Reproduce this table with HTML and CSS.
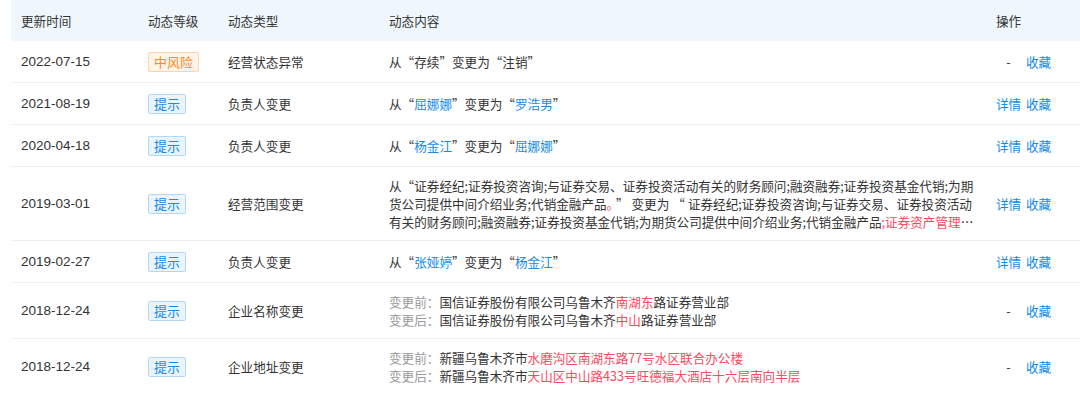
FILE: index.html
```html
<!DOCTYPE html>
<html lang="zh-CN">
<head>
<meta charset="utf-8">
<title>动态</title>
<link rel="stylesheet" href="styles.css">
</head>
<body>
<table class="dyn">
  <colgroup>
    <col class="c-date"><col class="c-level"><col class="c-type"><col class="c-content"><col class="c-op">
  </colgroup>
  <thead>
    <tr><th>更新时间</th><th>动态等级</th><th>动态类型</th><th>动态内容</th><th>操作</th></tr>
  </thead>
  <tbody>
    <tr>
      <td class="date">2022-07-15</td>
      <td><span class="tag tag-warn">中风险</span></td>
      <td>经营状态异常</td>
      <td class="content">从“存续”变更为“注销”</td>
      <td><span class="ops"><span class="slot">-</span><a class="link">收藏</a></span></td>
    </tr>
    <tr>
      <td class="date">2021-08-19</td>
      <td><span class="tag tag-info">提示</span></td>
      <td>负责人变更</td>
      <td class="content">从“<a class="link">屈娜娜</a>”变更为“<a class="link">罗浩男</a>”</td>
      <td><span class="ops"><a class="link slot">详情</a><a class="link">收藏</a></span></td>
    </tr>
    <tr>
      <td class="date">2020-04-18</td>
      <td><span class="tag tag-info">提示</span></td>
      <td>负责人变更</td>
      <td class="content">从“<a class="link">杨金江</a>”变更为“<a class="link">屈娜娜</a>”</td>
      <td><span class="ops"><a class="link slot">详情</a><a class="link">收藏</a></span></td>
    </tr>
    <tr>
      <td class="date">2019-03-01</td>
      <td><span class="tag tag-info">提示</span></td>
      <td>经营范围变更</td>
      <td class="content"><div class="clamp">从“证券经纪;证券投资咨询;与证券交易、证券投资活动有关的财务顾问;融资融券;证券投资基金代销;为期货公司提供中间介绍业务;代销金融产品<span class="red">。</span><span class="q">”</span>变更为<span class="q">“</span>证券经纪;证券投资咨询;与证券交易、证券投资活动有关的财务顾问;融资融券;证券投资基金代销;为期货公司提供中间介绍业务;代销金融产品<span class="red">;证券资产管理(依法须经批准的项目,经相关部门批准后方可开展经营活动)</span>”</div></td>
      <td><span class="ops"><a class="link slot">详情</a><a class="link">收藏</a></span></td>
    </tr>
    <tr>
      <td class="date">2019-02-27</td>
      <td><span class="tag tag-info">提示</span></td>
      <td>负责人变更</td>
      <td class="content">从“<a class="link">张娅婷</a>”变更为“<a class="link">杨金江</a>”</td>
      <td><span class="ops"><a class="link slot">详情</a><a class="link">收藏</a></span></td>
    </tr>
    <tr>
      <td class="date">2018-12-24</td>
      <td><span class="tag tag-info">提示</span></td>
      <td>企业名称变更</td>
      <td class="content">
        <div class="lines">
          <div><span class="label">变更前：</span>国信证券股份有限公司乌鲁木齐<span class="red">南湖东</span>路证券营业部</div>
          <div><span class="label">变更后：</span>国信证券股份有限公司乌鲁木齐<span class="red">中山</span>路证券营业部</div>
        </div>
      </td>
      <td><span class="ops"><span class="slot">-</span><a class="link">收藏</a></span></td>
    </tr>
    <tr>
      <td class="date">2018-12-24</td>
      <td><span class="tag tag-info">提示</span></td>
      <td>企业地址变更</td>
      <td class="content">
        <div class="lines">
          <div><span class="label">变更前：</span>新疆乌鲁木齐市<span class="red">水磨沟区南湖东路77号水区联合办公楼</span></div>
          <div><span class="label">变更后：</span>新疆乌鲁木齐市<span class="red">天山区中山路433号旺德福大酒店十六层南向半层</span></div>
        </div>
      </td>
      <td><span class="ops"><span class="slot">-</span><a class="link">收藏</a></span></td>
    </tr>
  </tbody>
</table>
</body>
</html>
```

FILE: styles.css
```css
html, body {
  margin: 0;
  padding: 0;
  background: #ffffff;
}

body {
  padding-left: 11px;
  font-family: "Noto Sans CJK SC", "Liberation Sans", sans-serif;
  font-size: 12.6px;
  color: #333333;
}

.dyn {
  width: 1069px;
  border-collapse: collapse;
  table-layout: fixed;
}

.c-date { width: 127px; }
.c-level { width: 80px; }
.c-type { width: 161px; }
.c-content { width: 607px; }
.c-op { width: 94px; }

.dyn th {
  height: 41px;
  padding: 0 10px;
  background: #eff7fc;
  font-weight: normal;
  text-align: left;
  line-height: 22px;
  color: #333333;
}

.dyn td {
  height: 22px;
  padding: 9.5px 10px;
  line-height: 22px;
  vertical-align: middle;
  border-bottom: 1px solid #eeeeee;
  white-space: nowrap;
  overflow: hidden;
}

.dyn td.content {
  white-space: normal;
}

.date {
  font-family: "Liberation Sans", "Noto Sans CJK SC", sans-serif;
  font-size: 13.5px;
}

.tag {
  display: inline-block;
  height: 20px;
  box-sizing: border-box;
  margin: 1px 0;
  padding: 0 5px;
  border: 1px solid;
  border-radius: 2px;
  font-size: 13px;
  line-height: 18px;
  vertical-align: top;
}

.tag-info {
  color: #128bed;
  background: #eaf4fd;
  border-color: #b3d8f7;
}

.tag-warn {
  color: #ff8a1f;
  background: #fff4ea;
  border-color: #ffd4ab;
}

.link {
  color: #128bed;
  text-decoration: none;
}

.red {
  color: #fd485e;
}

.label {
  color: #999999;
}

.q {
  margin: 0 3px;
}

.clamp {
  line-height: 18px;
  display: -webkit-box;
  -webkit-box-orient: vertical;
  -webkit-line-clamp: 3;
  overflow: hidden;
}

.lines {
  line-height: 18px;
}

.ops {
  display: inline-flex;
  align-items: center;
  gap: 5px;
  height: 22px;
  vertical-align: top;
}

.ops .slot {
  display: inline-block;
  width: 25px;
  text-align: center;
}
```
